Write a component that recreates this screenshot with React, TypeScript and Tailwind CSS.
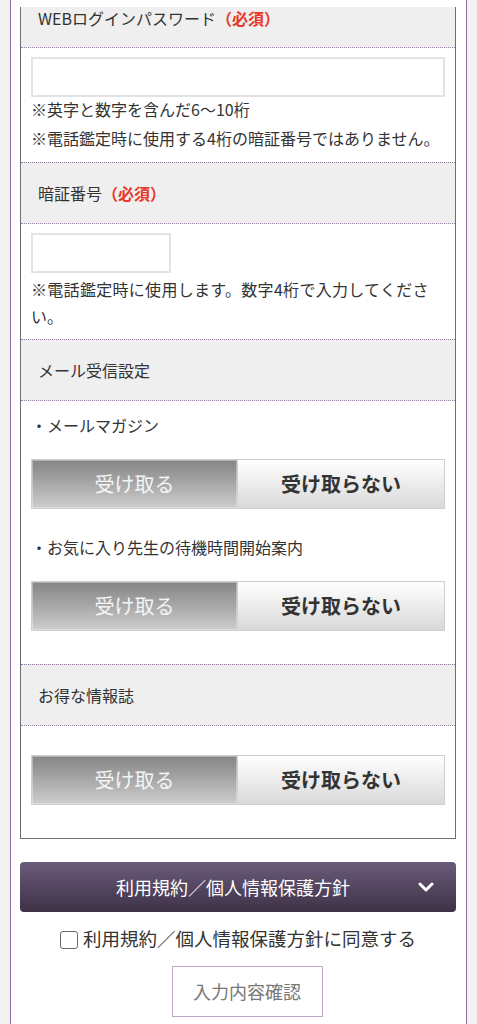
import React from "react";

const font = { fontFamily: '"Noto Sans CJK JP", "Noto Sans", sans-serif' };

function Header({ children, first }: { children: React.ReactNode; first?: boolean }) {
  return (
    <div
      className={
        "bg-[#efefef] border-b border-dotted border-[#9b86a8] pl-[17px] text-[16px] text-[#333] flex items-center " +
        (first ? "h-[41px] items-start pt-0 leading-[20px]" : "h-[62px] border-t border-t-[#8c7399]")
      }
    >
      <div className={first ? "pt-[1px]" : ""}>{children}</div>
    </div>
  );
}

function Req() {
  return <span className="text-[#e8382b] font-bold">（必須）</span>;
}

function Toggle() {
  return (
    <div className="grid grid-cols-2 h-[50px]">
      <div className="flex items-center justify-center border border-[#cfcfcf] bg-gradient-to-b from-[#858585] to-[#cdcdcd] text-[#f4f4f4] text-[20px] shadow-[inset_0_0_0_1px_rgba(255,255,255,0.35)]">
        受け取る
      </div>
      <div className="flex items-center justify-center border border-l-0 border-[#cfcfcf] bg-gradient-to-b from-[#ffffff] to-[#d9d9d9] text-[#333] font-bold text-[20px]">
        受け取らない
      </div>
    </div>
  );
}

export default function App() {
  return (
    <div className="min-h-[1024px] bg-[#f3f2f2] px-[10px]" style={font}>
      <div className="bg-white border-x border-[#8c6f9e] pl-[9px] pr-[10px] pt-[7px] pb-[40px]">
        <div className="border-x border-b border-[#6f6f6f]">
          {/* Section 1 */}
          <Header first>
            WEBログインパスワード<Req />
          </Header>
          <div className="px-[10px] pt-[9px] pb-[9px]">
            <div className="h-[40px] border-2 border-[#e3e3e3] bg-white" />
            <div className="text-[16px] leading-[29px] text-[#333] -mt-[2px]">
              <div className="whitespace-nowrap">※英字と数字を含んだ6〜10桁</div>
              <div className="whitespace-nowrap">※電話鑑定時に使用する4桁の暗証番号ではありません。</div>
            </div>
          </div>

          {/* Section 2 */}
          <Header>
            暗証番号<Req />
          </Header>
          <div className="px-[10px] pt-[9px] pb-[9px]">
            <div className="h-[40px] w-[140px] border-2 border-[#e3e3e3] bg-white" />
            <div className="text-[16px] leading-[27px] text-[#333] mt-[3px]">
              <div className="whitespace-nowrap tracking-[0.3px]">※電話鑑定時に使用します。数字4桁で入力してくださ</div>
              <div>い。</div>
            </div>
          </div>

          {/* Section 3 */}
          <Header>メール受信設定</Header>
          <div className="px-[10px] pt-[10px] pb-[33px] text-[16px] text-[#333]">
            <div className="leading-[28px]">・メールマガジン</div>
            <div className="mt-[20px]">
              <Toggle />
            </div>
            <div className="leading-[28px] mt-[24px]">・お気に入り先生の待機時間開始案内</div>
            <div className="mt-[20px]">
              <Toggle />
            </div>
          </div>

          {/* Section 4 */}
          <Header>お得な情報誌</Header>
          <div className="px-[10px] pt-[29px] pb-[33px]">
            <Toggle />
          </div>
        </div>

        {/* Terms bar */}
        <div className="mt-[23px] h-[50px] rounded-[4px] bg-gradient-to-b from-[#6b5b7b] to-[#3e3247] flex items-center relative text-white">
          <div className="w-full text-center text-[18px] pr-[10px]">利用規約／個人情報保護方針</div>
          <svg
            className="absolute right-[22px] top-1/2 -translate-y-1/2"
            width="16"
            height="11"
            viewBox="0 0 16 11"
            fill="none"
          >
            <path d="M2 2.5 L8 8.5 L14 2.5" stroke="white" strokeWidth="3" strokeLinecap="round" strokeLinejoin="round" />
          </svg>
        </div>

        {/* Checkbox */}
        <div className="flex items-center justify-center mt-[16px] h-[22px] text-[18.5px] text-[#333]">
          <span className="w-[18px] h-[18px] border border-[#666] rounded-[3px] bg-white mr-[5px] mt-[1px]" />
          <span>利用規約／個人情報保護方針に同意する</span>
        </div>

        {/* Confirm button */}
        <div className="flex justify-center mt-[16px] pl-[18px]">
          <div className="w-[151px] h-[51px] border border-[#bca7c8] bg-white flex items-center justify-center text-[18px] text-[#777]">
            入力内容確認
          </div>
        </div>
      </div>
    </div>
  );
}
